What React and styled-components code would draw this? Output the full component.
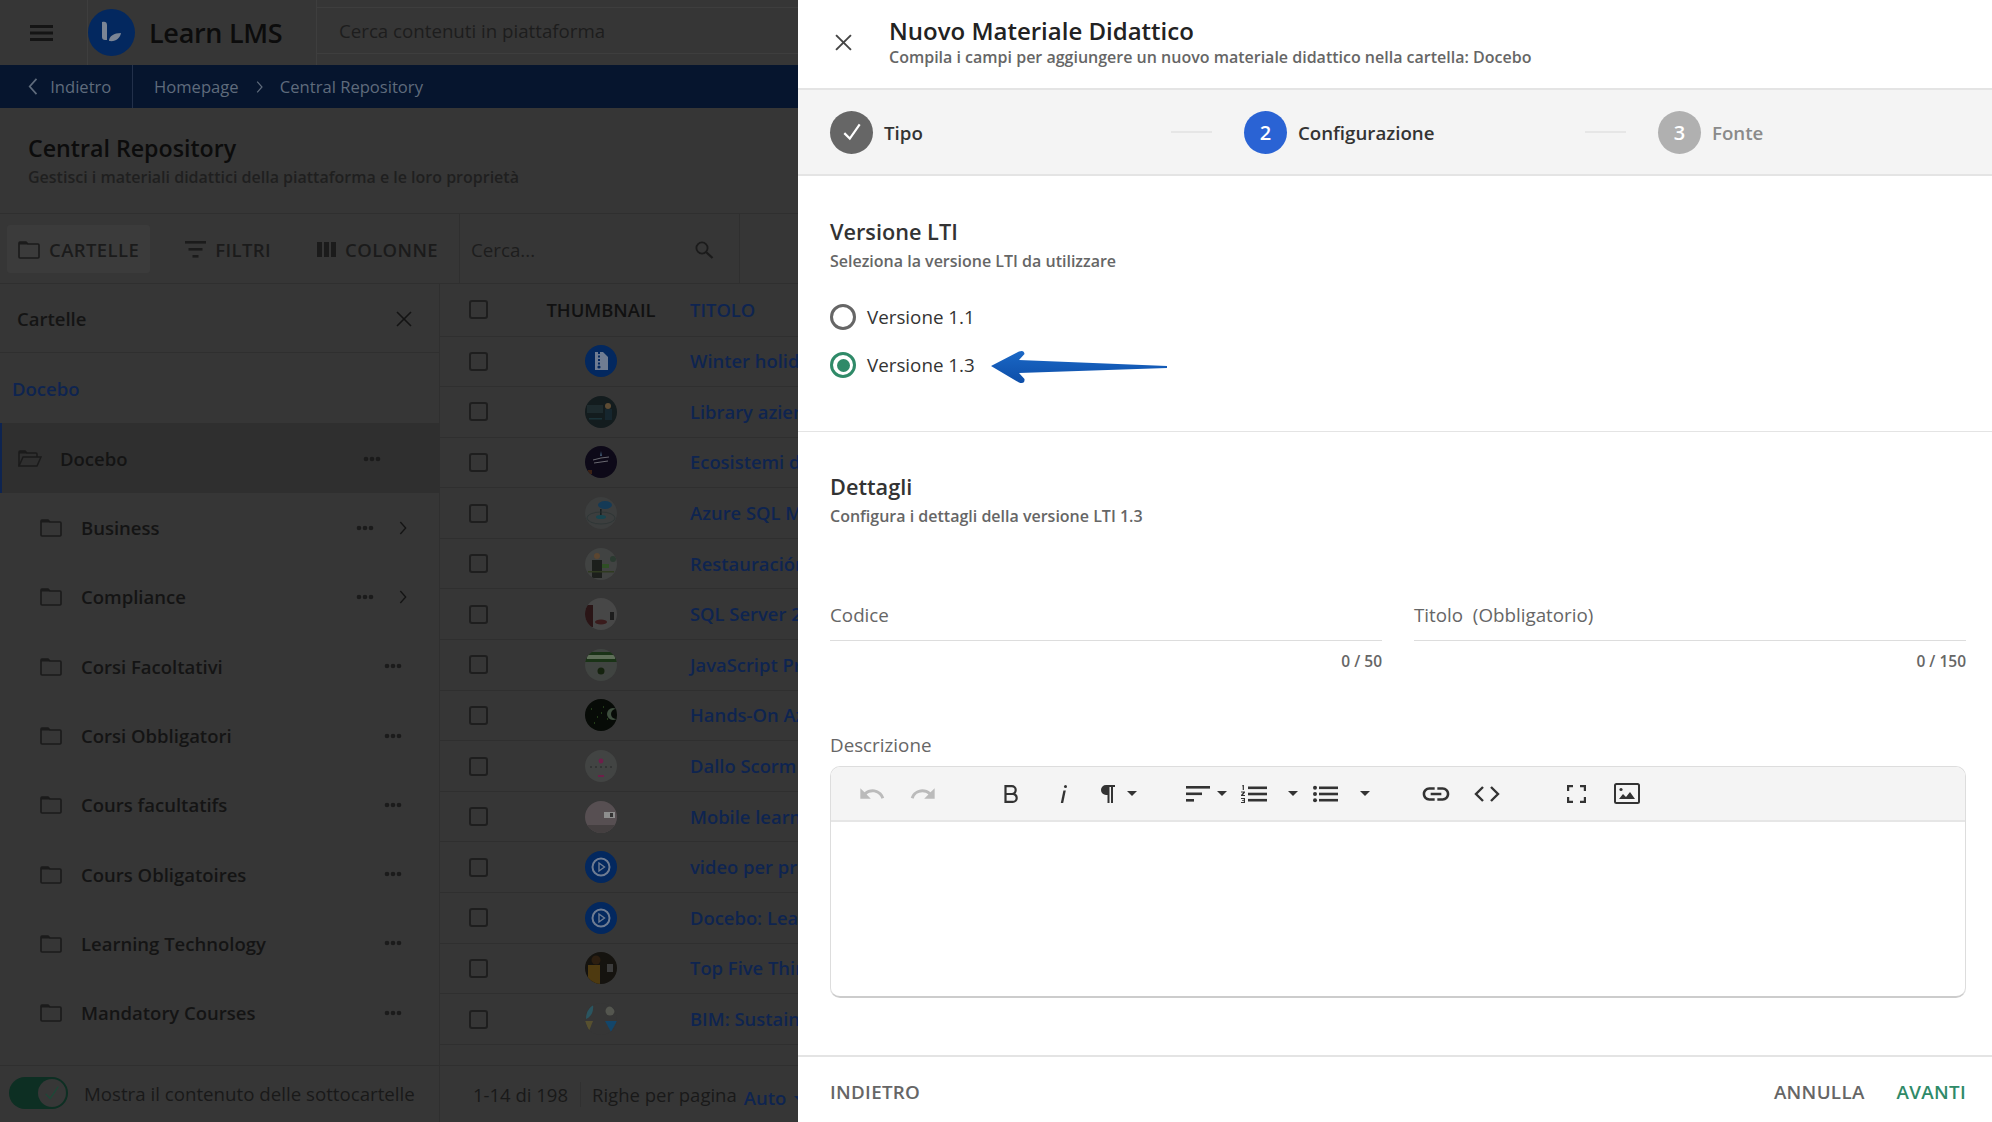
import React from 'react';
import styled, { createGlobalStyle } from 'styled-components';
import { MdUndo, MdRedo, MdLink } from 'react-icons/md';

const GlobalStyle = createGlobalStyle`
  html, body { margin: 0; padding: 0; background: #363636; }
  * { box-sizing: border-box; }
  body { font-family: "Open Sans", "Liberation Sans", sans-serif; }
`;

const Page = styled.div`
  width: 1992px;
  height: 1122px;
  display: grid;
  grid-template-columns: 798px 1194px;
  overflow: hidden;
`;

/* dimmed app behind the drawer */
const Backdrop = styled.div`
  width: 798px;
  height: 1122px;
  display: flex;
  flex-direction: column;
  overflow: hidden;
  background: #363636;
  color: #141414;
`;

const TopBar = styled.div`
  height: 65px;
  flex: none;
  display: flex;
`;

const MenuBtn = styled.div`
  width: 87px;
  padding-left: 30px;
  display: flex;
  align-items: center;
`;

const LogoTile = styled.div`
  width: 230px;
  display: flex;
  align-items: center;
  gap: 14px;
  border-left: 1px solid #3e3e3e;
  border-right: 1px solid #3e3e3e;
`;

const LogoText = styled.span`
  font-size: 27px;
  font-weight: 600;
  letter-spacing: -0.3px;
  color: #0c0c0c;
`;

const TopSearch = styled.div`
  flex: 1;
  margin: 7px 0 11px;
  padding-left: 22px;
  display: flex;
  align-items: center;
  font-size: 18.7px;
  color: #1d1d1d;
  border-top: 1px solid #3e3e3e;
  border-bottom: 1px solid #3e3e3e;
`;

const Crumbs = styled.div`
  height: 43px;
  flex: none;
  display: flex;
  align-items: center;
  background: #06152e;
  color: #5f6b7c;
  font-size: 16.6px;
`;

const CrumbBack = styled.div`
  width: 133px;
  height: 100%;
  padding-left: 28px;
  display: flex;
  align-items: center;
  gap: 12px;
  border-right: 1px solid #22304a;
`;

const CrumbTrail = styled.div`
  padding-left: 21px;
  display: flex;
  align-items: center;
  gap: 17px;
`;

const PageHead = styled.div`
  height: 106px;
  flex: none;
  padding: 24px 0 0 28px;
  border-bottom: 1px solid #2f2f2f;
`;

const PageTitle = styled.div`
  font-size: 23.2px;
  line-height: 32px;
  font-weight: 600;
  color: #0c0c0c;
`;

const PageSub = styled.div`
  margin-top: 2px;
  font-size: 16px;
  line-height: 22px;
  font-weight: 600;
  color: #1f1f1f;
`;

const Tools = styled.div`
  height: 70px;
  flex: none;
  display: flex;
  align-items: center;
  border-bottom: 1px solid #2f2f2f;
`;

const ToolBtn = styled.div`
  height: 48px;
  margin-left: ${p => p.$ml}px;
  padding: 2px ${p => p.$pad || 0}px 0;
  display: flex;
  align-items: center;
  gap: 9px;
  font-size: 18.5px;
  font-weight: 600;
  letter-spacing: 0.4px;
  color: #1b1b1b;
  border-radius: 3px;
  background: ${p => (p.$active ? '#3b3b3b' : 'transparent')};
`;

const ToolSearch = styled.div`
  width: 281px;
  height: 100%;
  margin-left: 21px;
  padding: 2px 25px 0 11px;
  display: flex;
  align-items: center;
  justify-content: space-between;
  font-size: 18.7px;
  color: #1d1d1d;
  border-left: 1px solid #2f2f2f;
  border-right: 1px solid #2f2f2f;
`;

const Content = styled.div`
  flex: 1;
  display: flex;
  min-height: 0;
`;

const FolderPanel = styled.div`
  width: 440px;
  flex: none;
  display: flex;
  flex-direction: column;
  border-right: 1px solid #2f2f2f;
`;

const PanelHead = styled.div`
  height: 69px;
  flex: none;
  padding: 1px 27px 0 17px;
  display: flex;
  align-items: center;
  justify-content: space-between;
  font-size: 18.5px;
  font-weight: 600;
  border-bottom: 1px solid #2f2f2f;
`;

const RootLink = styled.div`
  height: 70px;
  flex: none;
  padding: 1px 0 0 12px;
  display: flex;
  align-items: center;
  font-size: 18.5px;
  font-weight: 600;
  color: #0e2450;
`;

const FolderRow = styled.div`
  height: ${p => (p.$root ? 70 : 69.3)}px;
  flex: none;
  display: flex;
  align-items: center;
  padding-left: ${p => (p.$root ? 16 : 40)}px;
  padding-top: ${p => (p.$root ? 1 : 0)}px;
  font-size: 18.5px;
  font-weight: 600;
  background: ${p => (p.$root ? '#2f2f2f' : 'transparent')};
  border-left: ${p => (p.$root ? '2px solid #0e2450' : 'none')};
`;

const FolderName = styled.span`
  margin-left: ${p => (p.$root ? 18 : 19)}px;
  flex: 1;
`;

const RowDots = styled.span`
  width: 18px;
  display: flex;
  margin-right: ${p => p.$mr}px;
`;

const RowChevron = styled.span`
  width: 8px;
  display: flex;
  margin-right: 32px;
  margin-left: -6px;
`;

const SubFooter = styled.div`
  height: 57px;
  flex: none;
  margin-top: auto;
  padding: 0 0 2px 9px;
  display: flex;
  align-items: center;
  gap: 16px;
  font-size: 18.7px;
  color: #191919;
  border-top: 1px solid #2f2f2f;
`;

const Toggle = styled.div`
  width: 59px;
  height: 32px;
  padding: 2px;
  flex: none;
  display: flex;
  justify-content: flex-end;
  border-radius: 16px;
  background: #0d2f23;
`;

const ToggleKnob = styled.div`
  width: 28px;
  height: 28px;
  display: flex;
  align-items: center;
  justify-content: center;
  border-radius: 50%;
  background: #373737;
`;

const TablePane = styled.div`
  flex: 1;
  display: flex;
  flex-direction: column;
  min-width: 0;
`;

const TableRow = styled.div`
  height: ${p => (p.$head ? 52.5 : 50.6)}px;
  flex: none;
  padding-left: 29px;
  display: grid;
  grid-template-columns: 77px 110px 1fr;
  align-items: center;
  border-bottom: 1px solid #2f2f2f;
`;

const CheckBox = styled.span`
  width: 19px;
  height: 19px;
  border: 2px solid #1e1e1e;
  border-radius: 3px;
`;

const HeadCell = styled.div`
  font-size: 18.4px;
  line-height: 24px;
  font-weight: 600;
  text-align: center;
  white-space: nowrap;
  color: #111;
`;

const ThumbCell = styled.div`
  display: flex;
  justify-content: center;
`;

const ThumbSvg = styled.svg`
  display: block;
  border-radius: 50%;
`;

const TitleCell = styled.div`
  padding-left: 34px;
  font-size: 18.4px;
  line-height: 24px;
  font-weight: 600;
  white-space: nowrap;
  color: #0e2450;
`;

const Pager = styled.div`
  height: 57px;
  flex: none;
  margin-top: auto;
  padding-left: 33px;
  display: flex;
  align-items: center;
  font-size: 18.5px;
  color: #191919;
  border-top: 1px solid #2f2f2f;
  white-space: nowrap;
`;

const PagerCount = styled.span`
  padding-right: 12px;
  margin-right: 11px;
  border-right: 1px solid #303030;
`;

const PagerAuto = styled.span`
  margin-left: 7px;
  margin-top: 6px;
  font-weight: 600;
  color: #0e2450;
`;

const PagerCaret = styled.span`
  margin: 8px 0 0 8px;
  border-left: 5px solid transparent;
  border-right: 5px solid transparent;
  border-top: 5px solid #0e2450;
`;

/* drawer */
const Drawer = styled.div`
  height: 1122px;
  display: flex;
  flex-direction: column;
  background: #fff;
  color: #333;
`;

const DrawerHead = styled.div`
  height: 90px;
  flex: none;
  padding-left: 37px;
  display: flex;
  border-bottom: 2px solid #e4e4e4;
`;

const CloseBtn = styled.div`
  width: 54px;
  padding-top: 34px;
`;

const DrawerTitle = styled.div`
  margin-top: 15px;
  font-size: 24px;
  line-height: 32px;
  font-weight: 600;
  color: #222;
`;

const DrawerSub = styled.div`
  font-size: 16px;
  line-height: 20px;
  font-weight: 600;
  color: #666;
`;

const Stepper = styled.div`
  height: 86px;
  flex: none;
  padding-left: 32px;
  display: grid;
  grid-template-columns: repeat(3, 414px);
  background: #f4f4f4;
  border-bottom: 2px solid #e4e4e4;
`;

const Step = styled.div`
  display: flex;
  align-items: center;
`;

const StepDot = styled.div`
  width: 43px;
  height: 43px;
  flex: none;
  display: flex;
  align-items: center;
  justify-content: center;
  border-radius: 50%;
  font-size: 20px;
  font-weight: 600;
  color: #fff;
  background: ${p => p.$color};
`;

const StepLabel = styled.div`
  margin-left: 11px;
  margin-top: 1px;
  font-size: 18.7px;
  font-weight: 600;
  color: ${p => p.$color};
`;

const StepDash = styled.div`
  width: 41px;
  height: 2px;
  margin-left: auto;
  margin-right: 32px;
  background: #e6e6e6;
`;

const Section = styled.div`
  padding: ${p => p.$pt}px 26px ${p => p.$pb}px 32px;
  border-bottom: ${p => (p.$line ? '1px solid #e4e4e4' : 'none')};
`;

const SectionTitle = styled.div`
  font-size: 21.7px;
  line-height: 30px;
  font-weight: 600;
  color: #333;
`;

const SectionSub = styled.div`
  margin-top: 3px;
  font-size: 16px;
  line-height: 22px;
  font-weight: 600;
  color: #666;
`;

const Radios = styled.div`
  margin-top: 21px;
`;

const RadioRow = styled.div`
  height: 48px;
  display: flex;
  align-items: center;
  font-size: 18.8px;
  color: #333;
`;

const RadioMark = styled.span`
  width: 26px;
  height: 26px;
  margin-right: 11px;
  display: flex;
  align-items: center;
  justify-content: center;
  border-radius: 50%;
  border: 3px solid ${p => (p.$on ? '#2f8a68' : '#666')};

  &::after {
    content: '';
    width: 13px;
    height: 13px;
    border-radius: 50%;
    background: ${p => (p.$on ? '#2f8a68' : 'transparent')};
  }
`;

const ArrowSvg = styled.svg`
  margin: 4px 0 0 15px;
`;

const FieldGrid = styled.div`
  margin-top: 75px;
  display: grid;
  grid-template-columns: 1fr 1fr;
  gap: 32px;
`;

const FieldLabel = styled.div`
  height: 39px;
  font-size: 18.8px;
  line-height: 26px;
  color: #666;
  border-bottom: 1px solid #ddd;
`;

const FieldCount = styled.div`
  margin-top: 9px;
  font-size: 15.5px;
  line-height: 22px;
  font-weight: 600;
  text-align: right;
  color: #666;
`;

const DescLabel = styled.div`
  margin-top: 61px;
  font-size: 18.8px;
  line-height: 24px;
  color: #666;
`;

const Editor = styled.div`
  margin-top: 9px;
  height: 232px;
  border: 1px solid #ddd;
  border-bottom: 2px solid #ccc;
  border-radius: 10px;
  overflow: hidden;
`;

const EditorBar = styled.div`
  height: 55px;
  padding-left: 26.5px;
  display: flex;
  align-items: center;
  background: #f4f4f4;
  border-bottom: 2px solid #e6e6e6;
`;

const Tool = styled.span`
  margin-left: ${p => p.$ml || 0}px;
  display: flex;
  flex: none;
  color: ${p => (p.$off ? '#bbb' : '#333')};
`;

const Caret = styled.span`
  margin-left: ${p => p.$ml}px;
  flex: none;
  width: 0;
  height: 0;
  border-left: 5px solid transparent;
  border-right: 5px solid transparent;
  border-top: 5px solid #333;
`;

const DrawerFoot = styled.div`
  height: 67px;
  flex: none;
  margin-top: auto;
  padding: 4px 26px 0 32px;
  display: flex;
  align-items: center;
  font-size: 18.8px;
  font-weight: 600;
  letter-spacing: 0.3px;
  color: #666;
  border-top: 2px solid #e4e4e4;
`;

const FootRight = styled.div`
  margin-left: auto;
  display: flex;
  gap: 32px;
`;

const FootNext = styled.span`
  color: #2f8a68;
`;

const Hamburger = () => (
  <svg width="23" height="16" viewBox="0 0 23 16" fill="#141414">
    <rect width="23" height="3" />
    <rect y="6.5" width="23" height="3" />
    <rect y="13" width="23" height="3" />
  </svg>
);

const Logo = () => (
  <svg width="47" height="47" viewBox="0 0 47 47">
    <circle cx="23.5" cy="23.5" r="23.5" fill="#03285f" />
    <path d="M14 13c3-1 5 0 5 3v15h-2c-2 0-3-1-3-3z" fill="#7b8595" />
    <path d="M21 32c0-5 5-8 12-8-1 5-5 9-12 8z" fill="#7b8595" />
  </svg>
);

const Chevron = ({ dir = 'right', size = 14, color = '#141414' }) => (
  <svg width={size * 0.6} height={size} viewBox="0 0 6 10" fill="none" stroke={color} strokeWidth="1">
    <polyline points={dir === 'right' ? '1,0.5 5,5 1,9.5' : '5,0.5 1,5 5,9.5'} />
  </svg>
);

const FolderIcon = ({ color = '#1b1b1b' }) => (
  <svg width="22" height="19" viewBox="0 0 22 19" fill="none" stroke={color} strokeWidth="1.6">
    <path d="M1 3a1 1 0 0 1 1-1h6l2 2h10a1 1 0 0 1 1 1v12a1 1 0 0 1-1 1H2a1 1 0 0 1-1-1z" />
    <path d="M1 2h7l2 2.5H1z" fill={color} stroke="none" />
  </svg>
);

const FolderOpenIcon = () => (
  <svg width="24" height="19" viewBox="0 0 24 19" fill="none" stroke="#1b1b1b" strokeWidth="1.5">
    <path d="M1 17V3a1 1 0 0 1 1-1h5l2 2h9a1 1 0 0 1 1 1v3" />
    <path d="M1 17l4-9h18l-4 9z" />
    <path d="M1 2h6l2 2.5H1z" fill="#1b1b1b" stroke="none" />
  </svg>
);

const FilterIcon = () => (
  <svg width="21" height="18" viewBox="0 0 21 18" fill="#1b1b1b">
    <rect width="21" height="2.6" />
    <rect x="3.5" y="7" width="14" height="2.6" />
    <rect x="7.5" y="14" width="6" height="2.6" />
  </svg>
);

const ColumnsIcon = () => (
  <svg width="19" height="15" viewBox="0 0 19 15" fill="#1b1b1b">
    <rect width="5" height="15" />
    <rect x="7" width="5" height="15" />
    <rect x="14" width="5" height="15" />
  </svg>
);

const SearchIcon = () => (
  <svg width="19" height="18" viewBox="0 0 19 18" fill="none" stroke="#1b1b1b" strokeWidth="1.8">
    <circle cx="7" cy="7" r="5.6" />
    <line x1="11" y1="11" x2="17.5" y2="17" strokeWidth="2.2" />
  </svg>
);

const CloseIcon = ({ size = 16, color = '#141414', width = 1.6 }) => (
  <svg width={size} height={size} viewBox="0 0 16 16" stroke={color} strokeWidth={width}>
    <line x1="1" y1="1" x2="15" y2="15" />
    <line x1="15" y1="1" x2="1" y2="15" />
  </svg>
);

const Dots = ({ color = '#1b1b1b' }) => (
  <svg width="18" height="6" viewBox="0 0 18 6" fill={color}>
    <circle cx="3" cy="3" r="2.3" />
    <circle cx="9" cy="3" r="2.3" />
    <circle cx="15" cy="3" r="2.3" />
  </svg>
);

const CheckMark = ({ size = 20, color = '#fff', width = 2 }) => (
  <svg width={size} height={size} viewBox="0 0 20 20" fill="none" stroke={color} strokeWidth={width}>
    <polyline points="3,11 8,16 17,3" />
  </svg>
);

const PlayThumb = () => (
  <>
    <rect width="32" height="32" fill="#03285f" />
    <circle cx="16" cy="16" r="8.5" fill="none" stroke="#6f7c92" strokeWidth="2" />
    <path d="M14 12l5.5 4-5.5 4z" fill="none" stroke="#6f7c92" strokeWidth="1.4" />
  </>
);

// small pictures of the course cards, just blobs of colour at this size
const thumbs = [
  <>
    <rect width="32" height="32" fill="#03285f" />
    <path d="M10 7h8l5 5v13H10z" fill="#6f7c92" />
    <path d="M14 7v14" stroke="#03285f" strokeWidth="2" strokeDasharray="2 1.5" />
    <circle cx="14" cy="22" r="1.6" fill="#03285f" />
  </>,
  <>
    <rect width="32" height="32" fill="#131c1e" />
    <rect x="2" y="9" width="16" height="8" fill="#1d2a2d" />
    <circle cx="23" cy="10" r="3" fill="#5e4c34" />
    <rect x="20" y="13" width="7" height="11" fill="#16262e" />
    <rect x="4" y="22" width="13" height="1.5" fill="#1b3238" />
  </>,
  <>
    <rect width="32" height="32" fill="#0d0918" />
    <path d="M8 14l8-2 8-1M9 17l7-1 7-1" stroke="#74747c" strokeWidth="0.9" />
    <path d="M16 5l1 5h-2z" fill="#3f5670" />
    <rect x="3" y="24" width="4" height="4" fill="#3c2215" />
  </>,
  <>
    <rect width="32" height="32" fill="#3c3e3e" />
    <ellipse cx="20" cy="8" rx="7" ry="4" fill="#153a56" />
    <rect x="15" y="12" width="1.6" height="6" fill="#182022" />
    <ellipse cx="16" cy="20" rx="5" ry="2" fill="#17454f" />
    <ellipse cx="16" cy="21" rx="14" ry="6" fill="none" stroke="#2a3334" strokeWidth="0.7" />
  </>,
  <>
    <rect width="32" height="32" fill="#414342" />
    <circle cx="12" cy="8" r="3" fill="#5c4630" />
    <path d="M7 12h10v18H7z" fill="#1c1f1c" />
    <circle cx="28" cy="11" r="3" fill="#2a3a30" />
    <rect x="17" y="16" width="7" height="4" fill="#2f4f25" />
    <rect x="3" y="23" width="26" height="1.5" fill="#2f3a20" />
  </>,
  <>
    <rect width="32" height="32" fill="#474747" />
    <rect y="7" width="8" height="22" fill="#2a1516" />
    <ellipse cx="16" cy="24" rx="6" ry="2.5" fill="#3a1b1c" />
    <rect x="25" y="14" width="4" height="8" fill="#1d1d1d" />
  </>,
  <>
    <rect width="32" height="32" fill="#404441" />
    <rect y="3" width="32" height="10" fill="#1a3317" />
    <rect x="2" y="6" width="28" height="4" fill="#5e6e58" />
    <circle cx="16" cy="22" r="3.5" fill="#15230f" />
  </>,
  <>
    <rect width="32" height="32" fill="#070b07" />
    <path d="M6 10h1M12 18h1M9 24h1M18 8h1M16 14h1M22 20h1" stroke="#3f6f2a" strokeWidth="1" />
    <circle cx="28" cy="15" r="6" fill="#3e4e3e" />
    <circle cx="31" cy="15" r="5" fill="#070b07" />
  </>,
  <>
    <rect width="32" height="32" fill="#424443" />
    <circle cx="16" cy="11" r="2.4" fill="#6e1f4a" />
    <path d="M5 17h22" stroke="#1e1e1e" strokeWidth="0.8" strokeDasharray="2 3" />
    <rect x="13" y="25" width="6" height="2" fill="#6e1f4a" />
  </>,
  <>
    <rect width="32" height="32" fill="#574f52" />
    <rect y="24" width="32" height="8" fill="#443f40" />
    <rect x="19" y="11" width="11" height="6" fill="#8e8e8e" />
    <rect x="25" y="12" width="3" height="4" fill="#333" />
  </>,
  <PlayThumb />,
  <PlayThumb />,
  <>
    <rect width="32" height="32" fill="#15130f" />
    <rect x="3" y="13" width="12" height="19" fill="#4e3a10" />
    <circle cx="11" cy="8" r="4.5" fill="#2c1e10" />
    <rect x="22" y="12" width="6" height="8" fill="#3c3c3c" />
  </>,
  <>
    <rect width="32" height="32" fill="#363636" />
    <path d="M1 16c0-7 3-11 7-14 1 7-2 12-7 14z" fill="#2a5560" />
    <path d="M0 18h8l-4 10z" fill="#57502f" />
    <circle cx="25" cy="8" r="4.5" fill="#54564f" />
    <path d="M20 18h12l-6 11z" fill="#13466a" />
  </>,
];

const rows = [
  'Winter holiday',
  'Library aziendale',
  'Ecosistemi di',
  'Azure SQL Managed',
  'Restauración',
  'SQL Server 2019',
  'JavaScript Programming',
  'Hands-On Azure',
  'Dallo Scorm',
  'Mobile learning',
  'video per prova',
  'Docebo: Learn',
  'Top Five Things',
  'BIM: Sustainability',
];

const folders = [
  { name: 'Business', more: true },
  { name: 'Compliance', more: true },
  { name: 'Corsi Facoltativi' },
  { name: 'Corsi Obbligatori' },
  { name: 'Cours facultatifs' },
  { name: 'Cours Obligatoires' },
  { name: 'Learning Technology' },
  { name: 'Mandatory Courses' },
];

const Backstage = () => (
  <Backdrop>
    <TopBar>
      <MenuBtn><Hamburger /></MenuBtn>
      <LogoTile>
        <Logo />
        <LogoText>Learn LMS</LogoText>
      </LogoTile>
      <TopSearch>Cerca contenuti in piattaforma</TopSearch>
    </TopBar>
    <Crumbs>
      <CrumbBack>
        <Chevron dir="left" size={17} color="#5f6b7c" />
        Indietro
      </CrumbBack>
      <CrumbTrail>
        Homepage
        <Chevron size={12} color="#5f6b7c" />
        Central Repository
      </CrumbTrail>
    </Crumbs>
    <PageHead>
      <PageTitle>Central Repository</PageTitle>
      <PageSub>Gestisci i materiali didattici della piattaforma e le loro proprietà</PageSub>
    </PageHead>
    <Tools>
      <ToolBtn $ml={7} $pad={11} $active><FolderIcon />CARTELLE</ToolBtn>
      <ToolBtn $ml={35}><FilterIcon />FILTRI</ToolBtn>
      <ToolBtn $ml={46}><ColumnsIcon />COLONNE</ToolBtn>
      <ToolSearch>Cerca...<SearchIcon /></ToolSearch>
    </Tools>
    <Content>
      <FolderPanel>
        <PanelHead>Cartelle<CloseIcon /></PanelHead>
        <RootLink>Docebo</RootLink>
        <FolderRow $root>
          <FolderOpenIcon />
          <FolderName $root>Docebo</FolderName>
          <RowDots $mr={58}><Dots /></RowDots>
        </FolderRow>
        {folders.map(f => (
          <FolderRow key={f.name}>
            <FolderIcon />
            <FolderName>{f.name}</FolderName>
            {f.more ? (
              <>
                <RowDots $mr={31}><Dots /></RowDots>
                <RowChevron><Chevron size={16} /></RowChevron>
              </>
            ) : (
              <RowDots $mr={37}><Dots /></RowDots>
            )}
          </FolderRow>
        ))}
        <SubFooter>
          <Toggle>
            <ToggleKnob><CheckMark size={18} color="#1c4a38" width={1.4} /></ToggleKnob>
          </Toggle>
          Mostra il contenuto delle sottocartelle
        </SubFooter>
      </FolderPanel>
      <TablePane>
        <TableRow $head>
          <CheckBox />
          <HeadCell>THUMBNAIL</HeadCell>
          <TitleCell>TITOLO</TitleCell>
        </TableRow>
        {rows.map((title, i) => (
          <TableRow key={title}>
            <CheckBox />
            <ThumbCell>
              <ThumbSvg width="32" height="32" viewBox="0 0 32 32">{thumbs[i]}</ThumbSvg>
            </ThumbCell>
            <TitleCell>{title}</TitleCell>
          </TableRow>
        ))}
        <Pager>
          <PagerCount>1-14 di 198</PagerCount>
          Righe per pagina
          <PagerAuto>Auto</PagerAuto>
          <PagerCaret />
        </Pager>
      </TablePane>
    </Content>
  </Backdrop>
);

const BoldIcon = () => (
  <svg width="15" height="18" viewBox="0 0 15 18" fill="none" stroke="#333" strokeWidth="2.2">
    <path d="M1.5 1.2h6.3a3.9 3.9 0 0 1 0 7.8H1.5zM1.5 9h7.3a3.9 3.9 0 0 1 0 7.8H1.5z" />
  </svg>
);

const ItalicIcon = () => (
  <svg width="7" height="18" viewBox="0 0 7 18" fill="#333">
    <circle cx="5.5" cy="1.6" r="1.5" />
    <path d="M3.4 5.5h2.4L3.2 18H.8z" />
  </svg>
);

const ParagraphIcon = () => (
  <svg width="15" height="18" viewBox="0 0 15 18" fill="#333">
    <path d="M6 0h9v2h-2v16h-2V2H9.5v16h-2v-8H6A5 5 0 0 1 6 0z" />
  </svg>
);

const AlignIcon = () => (
  <svg width="24" height="16" viewBox="0 0 24 16" fill="#333">
    <rect width="24" height="2.6" />
    <rect y="6.5" width="16" height="2.6" />
    <rect y="13" width="8" height="2.6" />
  </svg>
);

const OrderedIcon = () => (
  <svg width="26" height="18" viewBox="0 0 26 18" fill="#333">
    <rect x="7" y="1.5" width="19" height="2.6" />
    <rect x="7" y="7.7" width="19" height="2.6" />
    <rect x="7" y="13.9" width="19" height="2.6" />
    <path d="M1.5 0h1.4v5H1.7V1.2h-.6zM0 6.5h4v1L2 10h2v1H0v-1l2.2-2.5H0zM0 13h4v5H0v-1h2.8v-1H1v-.8h1.8V14H0z" />
  </svg>
);

const BulletIcon = () => (
  <svg width="25" height="18" viewBox="0 0 25 18" fill="#333">
    <rect x="6" y="1.5" width="19" height="2.6" />
    <rect x="6" y="7.7" width="19" height="2.6" />
    <rect x="6" y="13.9" width="19" height="2.6" />
    <circle cx="2" cy="2.8" r="2" />
    <circle cx="2" cy="9" r="2" />
    <circle cx="2" cy="15.2" r="2" />
  </svg>
);

const CodeIcon = () => (
  <svg width="26" height="16" viewBox="0 0 26 16" fill="none" stroke="#333" strokeWidth="2.4">
    <polyline points="9,1 2,8 9,15" />
    <polyline points="17,1 24,8 17,15" />
  </svg>
);

const FullIcon = () => (
  <svg width="19" height="18" viewBox="0 0 19 18" fill="none" stroke="#333" strokeWidth="2.2">
    <path d="M1.1 6V1.1H6M13 1.1h4.9V6M1.1 12v4.9H6M13 16.9h4.9V12" />
  </svg>
);

const ImageIcon = () => (
  <svg width="26" height="21" viewBox="0 0 26 21" fill="#333">
    <rect x="1" y="1" width="24" height="19" rx="1.5" fill="none" stroke="#333" strokeWidth="2" />
    <circle cx="7" cy="6.5" r="1.6" />
    <path d="M5 16l4-5 3 3 4-5 5 7z" />
  </svg>
);

const Arrow = () => (
  <ArrowSvg width="178" height="36" viewBox="0 0 178 36">
    <defs>
      <linearGradient id="arrowFill" x1="0" y1="0" x2="0" y2="1">
        <stop offset="0" stopColor="#1b68c6" />
        <stop offset="1" stopColor="#0d4ea8" />
      </linearGradient>
    </defs>
    <path
      d="M1 17 L29 2.5 Q34 0.5 34.5 5 L29 11 L177 17 L177 19 L29 24 L34.5 30 Q35 35.5 29 33.5 Z"
      fill="url(#arrowFill)"
    />
  </ArrowSvg>
);

const Form = () => (
  <Drawer>
    <DrawerHead>
      <CloseBtn><CloseIcon size={17} color="#444" width={1.8} /></CloseBtn>
      <div>
        <DrawerTitle>Nuovo Materiale Didattico</DrawerTitle>
        <DrawerSub>Compila i campi per aggiungere un nuovo materiale didattico nella cartella: Docebo</DrawerSub>
      </div>
    </DrawerHead>
    <Stepper>
      <Step>
        <StepDot $color="#666"><CheckMark size={22} /></StepDot>
        <StepLabel $color="#333">Tipo</StepLabel>
        <StepDash />
      </Step>
      <Step>
        <StepDot $color="#2a63d4">2</StepDot>
        <StepLabel $color="#333">Configurazione</StepLabel>
        <StepDash />
      </Step>
      <Step>
        <StepDot $color="#b0b0b0">3</StepDot>
        <StepLabel $color="#8a8a8a">Fonte</StepLabel>
      </Step>
    </Stepper>
    <Section $pt={41} $pb={42} $line>
      <SectionTitle>Versione LTI</SectionTitle>
      <SectionSub>Seleziona la versione LTI da utilizzare</SectionSub>
      <Radios>
        <RadioRow><RadioMark />Versione 1.1</RadioRow>
        <RadioRow><RadioMark $on />Versione 1.3<Arrow /></RadioRow>
      </Radios>
    </Section>
    <Section $pt={40} $pb={0}>
      <SectionTitle>Dettagli</SectionTitle>
      <SectionSub>Configura i dettagli della versione LTI 1.3</SectionSub>
      <FieldGrid>
        <div>
          <FieldLabel>Codice</FieldLabel>
          <FieldCount>0 / 50</FieldCount>
        </div>
        <div>
          <FieldLabel>Titolo&nbsp;&nbsp;(Obbligatorio)</FieldLabel>
          <FieldCount>0 / 150</FieldCount>
        </div>
      </FieldGrid>
      <DescLabel>Descrizione</DescLabel>
      <Editor>
        <EditorBar>
          <Tool $off><MdUndo size={28} /></Tool>
          <Tool $off $ml={23}><MdRedo size={28} /></Tool>
          <Tool $ml={67.5}><BoldIcon /></Tool>
          <Tool $ml={41}><ItalicIcon /></Tool>
          <Tool $ml={33}><ParagraphIcon /></Tool>
          <Caret $ml={12} />
          <Tool $ml={49}><AlignIcon /></Tool>
          <Caret $ml={7} />
          <Tool $ml={14}><OrderedIcon /></Tool>
          <Caret $ml={21} />
          <Tool $ml={15}><BulletIcon /></Tool>
          <Caret $ml={22} />
          <Tool $ml={50}><MdLink size={32} /></Tool>
          <Tool $ml={22}><CodeIcon /></Tool>
          <Tool $ml={67}><FullIcon /></Tool>
          <Tool $ml={28}><ImageIcon /></Tool>
        </EditorBar>
      </Editor>
    </Section>
    <DrawerFoot>
      INDIETRO
      <FootRight>
        ANNULLA
        <FootNext>AVANTI</FootNext>
      </FootRight>
    </DrawerFoot>
  </Drawer>
);

export default function App() {
  return (
    <Page>
      <GlobalStyle />
      <Backstage />
      <Form />
    </Page>
  );
}
